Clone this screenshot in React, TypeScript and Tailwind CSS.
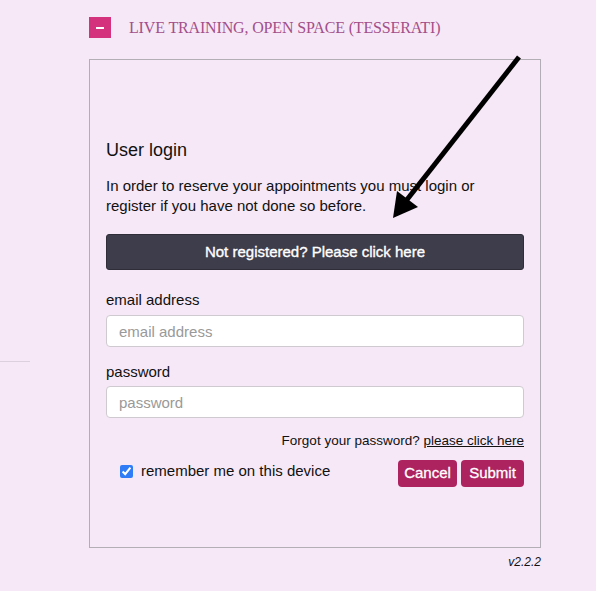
import { useState } from "react";

export default function App() {
  const [remember, setRemember] = useState(true);

  return (
    <div className="relative min-h-screen bg-[#f6e8f7] pt-[17px] font-['Liberation_Sans',Arial,sans-serif] text-[#111]">
      {/* left rule from the sidebar */}
      <div className="absolute left-0 top-[361px] h-px w-[30px] bg-[#ddd0de]" />

      {/* Section header */}
      <div className="flex h-[21px] items-center pl-[89px]">
        <button className="flex h-[21px] w-[22px] items-center justify-center bg-[#d4327d]" aria-label="collapse">
          <span className="block h-[2px] w-[8px] bg-white" />
        </button>
        <h2 className="ml-[18px] font-['Liberation_Serif',serif] text-[16px] leading-none tracking-[-0.15px] text-[#a24f8a]">
          LIVE TRAINING, OPEN SPACE (TESSERATI)
        </h2>
      </div>

      {/* Login card */}
      <div className="ml-[89px] mt-[21px] h-[489px] w-[452px] border border-[#b3adb5] px-4 pt-[78px]">
        <h3 className="text-[18px] leading-6">User login</h3>
        <p className="mt-[14px] text-[15px] leading-5">
          In order to reserve your appointments you must login or
          <br />
          register if you have not done so before.
        </p>
        <button className="mt-[18px] h-9 w-full rounded-[3px] border border-[#2e2d38] bg-[#3e3d4b] text-[15px] text-white [-webkit-text-stroke:0.35px_white]">
          Not registered? Please click here
        </button>

        <label className="mt-5 block text-[15px] leading-5">email address</label>
        <input
          type="email"
          placeholder="email address"
          className="mt-[5px] h-8 w-full rounded-[4px] border border-[#cfcacf] bg-white px-3 text-[15px] placeholder:text-[#999]"
        />

        <label className="mt-[15px] block text-[15px] leading-5">password</label>
        <input
          type="password"
          placeholder="password"
          className="mt-1 h-8 w-full rounded-[4px] border border-[#cfcacf] bg-white px-3 text-[15px] placeholder:text-[#999]"
        />

        <p className="mt-[13px] text-right text-[13.5px] leading-5">
          Forgot your password? <a className="underline">please click here</a>
        </p>

        <div className="mt-[9px] flex items-start justify-between">
          <label className="ml-[14px] mt-[1px] flex items-center gap-2 text-[15px] leading-5">
            <input
              type="checkbox"
              checked={remember}
              onChange={(e) => setRemember(e.target.checked)}
              className="m-0 h-[13px] w-[13px] accent-[#2f7cf6]"
            />
            remember me on this device
          </label>
          <div className="flex gap-1">
            <button className="h-[27px] w-[59px] rounded-[4px] bg-[#ad2360] text-[15px] text-white [-webkit-text-stroke:0.3px_white]">Cancel</button>
            <button className="h-[27px] w-[63px] rounded-[4px] bg-[#ad2360] text-[15px] text-white [-webkit-text-stroke:0.3px_white]">Submit</button>
          </div>
        </div>
      </div>

      <p className="w-[541px] pt-[5px] text-right text-[12px] italic">v2.2.2</p>

      {/* annotation arrow */}
      <svg className="pointer-events-none absolute left-0 top-0" width="596" height="591">
        <line x1="519" y1="57" x2="402" y2="206" stroke="#000" strokeWidth="5" />
        <polygon points="393,218 397,191 418,207" fill="#000" />
      </svg>
    </div>
  );
}
